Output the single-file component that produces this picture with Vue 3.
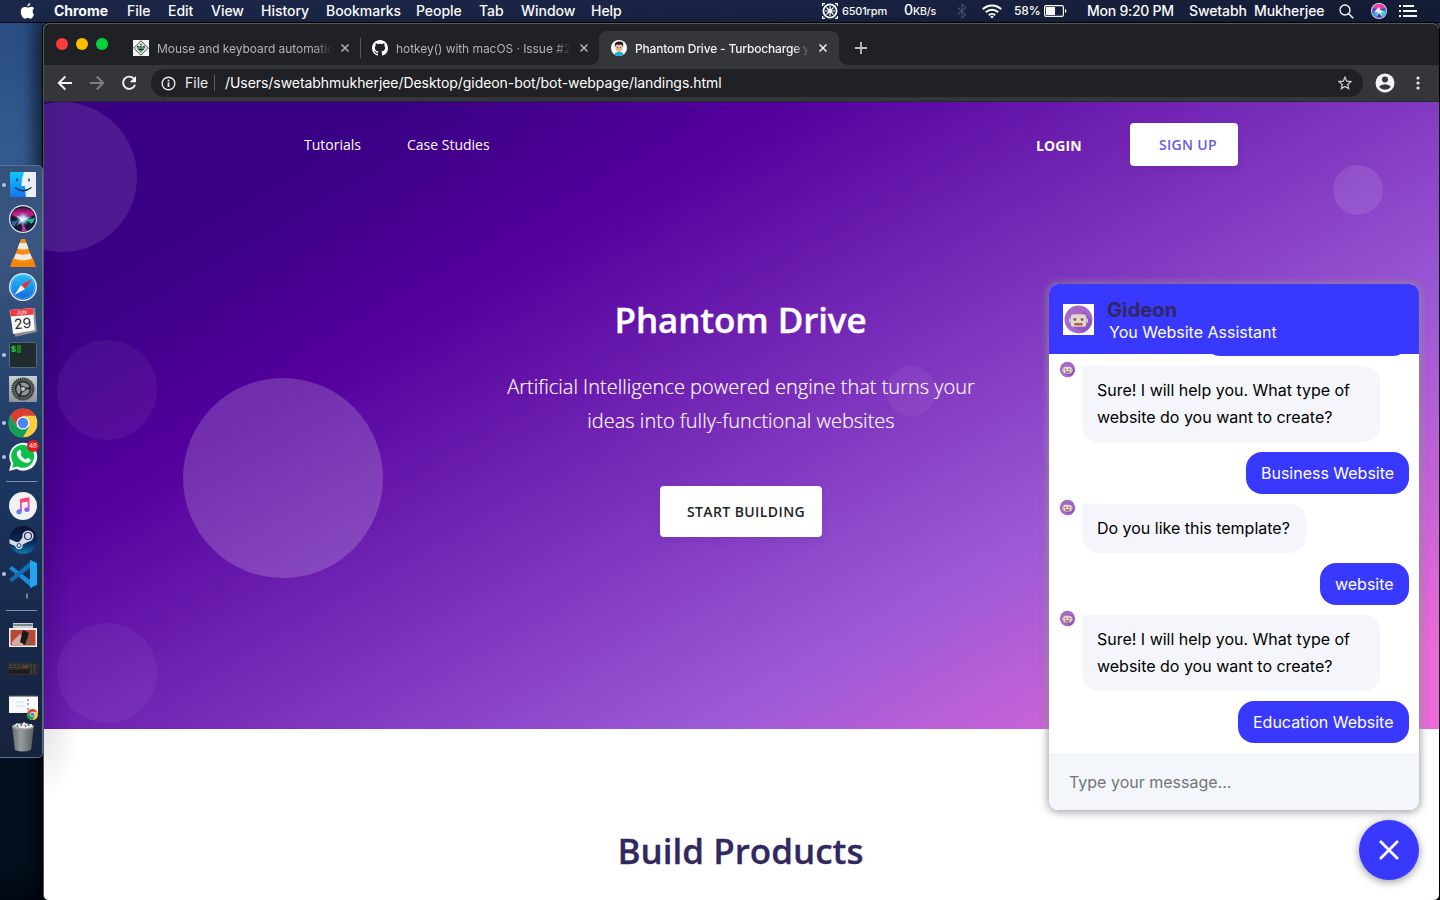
<script setup>
const menus = ['Chrome', 'File', 'Edit', 'View', 'History', 'Bookmarks', 'People', 'Tab', 'Window', 'Help']
const tabs = [
  { icon: 'docs', title: 'Mouse and keyboard automation' },
  { icon: 'github', title: 'hotkey() with macOS · Issue #24' },
  { icon: 'avatar', title: 'Phantom Drive - Turbocharge your', active: true }
]
const question = ['Sure! I will help you. What type of', 'website do you want to create?']
const messages = [
  { from: 'user', size: 'w205', lines: [] },
  { from: 'bot', size: 'w298', lines: question },
  { from: 'user', size: 'w163', lines: ['Business Website'] },
  { from: 'bot', size: 'w224', lines: ['Do you like this template?'] },
  { from: 'user', size: 'w89', lines: ['website'] },
  { from: 'bot', size: 'w298', lines: question },
  { from: 'user', size: 'w171', lines: ['Education Website'] }
]
</script>

<template>
  <div class="desktop">
    <svg width="0" height="0" class="defs">
      <defs>
        <linearGradient id="safari" x1="0" y1="0" x2="0" y2="1"><stop offset="0" stop-color="#22c0fb" /><stop offset="1" stop-color="#1569dd" /></linearGradient>
        <radialGradient id="siriGlow"><stop offset="0" stop-color="#fff" /><stop offset=".35" stop-color="#b8f4ff" stop-opacity=".85" /><stop offset="1" stop-color="#6fd0ff" stop-opacity="0" /></radialGradient>
        <linearGradient id="siriTop" x1="0" y1="0" x2="0" y2="1"><stop offset="0" stop-color="#3d1650" /><stop offset=".5" stop-color="#d0177f" /><stop offset="1" stop-color="#7a2a8c" /></linearGradient>
        <linearGradient id="note" x1="0" y1="0" x2="0" y2="1"><stop offset="0" stop-color="#ff3d60" /><stop offset=".4" stop-color="#f84a9a" /><stop offset=".75" stop-color="#8a5cf6" /><stop offset="1" stop-color="#2fa8fa" /></linearGradient>
        <linearGradient id="steam" x1="0" y1="0" x2="0" y2="1"><stop offset="0" stop-color="#0c1230" /><stop offset=".6" stop-color="#0b2a5a" /><stop offset="1" stop-color="#1179b0" /></linearGradient>
        <linearGradient id="metal" x1="0" y1="0" x2="0" y2="1"><stop offset="0" stop-color="#c9d0d4" /><stop offset="1" stop-color="#8c9499" /></linearGradient>
        <linearGradient id="bin" x1="0" y1="0" x2="1" y2="0"><stop offset="0" stop-color="#6d7070" /><stop offset=".4" stop-color="#a0a2a2" /><stop offset="1" stop-color="#5c5f5f" /></linearGradient>
        <linearGradient id="finder" x1="0" y1="0" x2="0" y2="1"><stop offset="0" stop-color="#12c4fd" /><stop offset="1" stop-color="#1277f3" /></linearGradient>
        <symbol id="chrome" viewBox="0 0 30 30">
          <circle cx="15" cy="15" r="15" fill="#ffcd40" />
          <path d="M2 7.500A15 15 0 0 1 28 7.500H15L8.500 18.800z" fill="#dd3e30" />
          <path d="M2 7.500A15 15 0 0 0 15 30L21.500 18.800H8.500z" fill="#11a05c" />
          <circle cx="15" cy="15" r="6.800" fill="#f4f4f4" /><circle cx="15" cy="15" r="5.400" fill="#4a86f0" />
        </symbol>
        <symbol id="robot" viewBox="0 0 30 30">
          <circle cx="15" cy="15" r="13.500" fill="#a668c9" />
          <path d="M20 7l8 9a13.500 13.500 0 0 1-9 12L9 21z" fill="#9355c0" />
          <path d="M15 6.500v4" stroke="#d8604a" stroke-width="1.200" />
          <rect x="7.500" y="10" width="15" height="12" rx="3" fill="#dcd9d2" /><path d="M6.600 14v4M23.400 14v4" stroke="#d4cfc9" stroke-width="1.600" />
          <circle cx="11.500" cy="15" r="1.400" fill="#9c5a3f" /><circle cx="18.500" cy="15" r="1.400" fill="#9c5a3f" />
          <rect x="11" y="18.300" width="8" height="2.400" rx=".6" fill="#b0603f" />
        </symbol>
      </defs>
    </svg>

    <header class="menubar">
      <svg class="apple" width="15" height="18" viewBox="0 0 15 18"><path d="M10.300 1c.1 1.700-1.300 3.400-2.900 3.400C7.200 2.700 8.700 1.200 10.300 1zM12.700 9.200c0-1.400.7-2.300 1.500-2.900-.9-1.200-2.200-1.500-3.100-1.500-1.300 0-2.400.8-3.200.8-.7 0-1.700-.7-2.900-.7C3 4.900.8 6.300.8 9.700c0 3.200 2.300 7 4.200 7 1 0 1.500-.7 2.800-.7 1.300 0 1.600.7 2.700.7 1.600 0 3-2.700 3.500-4.300-.9-.5-1.300-1.700-1.300-3.200z" fill="#fff" /></svg>
      <nav class="menus"><span v-for="m in menus" :key="m">{{ m }}</span></nav>
      <div class="status">
        <svg class="fan" width="16" height="16" viewBox="0 0 16 16" fill="none" stroke="#fff"><path d="M.5 3V.5H3M13 .5h2.500V3M15.500 13v2.500H13M3 15.500H.5V13" stroke-width="1.500" /><circle cx="8" cy="8" r="6.600" stroke-width="1.800" /><path d="M8 3v10M3 8h10M4.500 4.500l7 7M11.500 4.500l-7 7" stroke-width="1.200" /></svg>
        <span class="rpm">6501rpm</span>
        <span class="net">0<small>KB/s</small></span>
        <svg class="bt" width="10" height="16" viewBox="0 0 10 16" fill="none" stroke="#4a5068" stroke-width="1.100"><path d="M.8 4.500l8 7L5 14.800V1.200l3.800 3.300-8 7" /></svg>
        <svg class="wifi" width="20" height="15" viewBox="0 0 20 15" fill="none" stroke="#fff" stroke-width="2"><path d="M.8 5.200a13 13 0 0 1 18.400 0M3.800 8.300a8.800 8.800 0 0 1 12.400 0M6.800 11.200a4.600 4.600 0 0 1 6.400 0" /><path d="M8.300 12.700a2.400 2.400 0 0 1 3.400 0L10 14.600z" fill="#fff" stroke="none" /></svg>
        <span class="pct">58%</span>
        <svg class="bat" width="23" height="12" viewBox="0 0 23 12"><rect x=".6" y=".6" width="18.800" height="10.800" rx="1.600" fill="none" stroke="#fff" stroke-width="1.200" /><rect x="2" y="2" width="9" height="8" fill="#fff" /><path d="M21 4v4q1.500-.5 1.500-2T21 4z" fill="#fff" /></svg>
        <span class="clock">Mon 9:20 PM</span>
        <span class="user">Swetabh&nbsp; Mukherjee</span>
        <svg class="search" width="15" height="15" viewBox="0 0 15 15" fill="none" stroke="#fff" stroke-width="1.300"><circle cx="6" cy="6" r="5" /><path d="M9.700 9.700l4.500 4.500" stroke-width="1.600" /></svg>
        <svg class="siri" width="16" height="16" viewBox="0 0 16 16"><circle cx="8" cy="8" r="8" fill="#dfe6f5" /><circle cx="8" cy="8" r="7" fill="#4e49c4" /><path d="M2 4.500A7 7 0 0 1 14 4.500L8 7z" fill="#f53c9b" /><path d="M1.500 10L8 7l-3 7.200A7 7 0 0 1 1.500 10z" fill="#2fb0e8" /><path d="M8 7l6.700 1a7 7 0 0 1-3 6z" fill="#27d3cf" /><path d="M8 4l1.500 3L14 9.500l-4-.5L11.500 14 8 10l-3 4 1.500-5L3 9z" fill="#fff" opacity=".9" /></svg>
        <svg class="list" width="18" height="12" viewBox="0 0 18 12" fill="#fff"><path d="M0 0h2v2H0zM4 0h11v2H4zM0 5h2v2H0zM4 5h14v2H4zM0 10h2v2H0zM4 10h14v2H4z" /></svg>
      </div>
    </header>

    <section class="window">
      <div class="tabstrip">
        <div class="lights"><i class="red"></i><i class="amber"></i><i class="green"></i></div>
        <div v-for="t in tabs" :key="t.icon" class="tab" :class="[t.icon, { active: t.active }]">
          <svg v-if="t.icon === 'docs'" width="16" height="16" viewBox="0 0 16 16"><path d="M0 0h16v16H0z" fill="#f4f4f4" /><path d="M8 .8L15.200 8 8 15.200.8 8z" fill="#e9efe9" stroke="#333" stroke-width=".9" /><path d="M8 3l4.500 4.500L8 13 3.500 7.500z" fill="#4f9478" /><path d="M4 6.500h8M5.500 9.500h5" stroke="#222" stroke-width="1" /><circle cx="6.500" cy="5.800" r="1" fill="#fff" /><circle cx="9.500" cy="5.800" r="1" fill="#fff" /></svg>
          <svg v-else-if="t.icon === 'github'" width="16" height="16" viewBox="0 0 16 16"><path fill="#fff" d="M8 0C3.580 0 0 3.580 0 8c0 3.540 2.290 6.530 5.470 7.590.4.070.55-.17.55-.38 0-.19-.01-.82-.01-1.490-2.010.37-2.530-.49-2.690-.94-.09-.23-.48-.94-.82-1.130-.28-.15-.68-.52-.01-.53.63-.01 1.080.58 1.230.82.72 1.210 1.870.87 2.330.66.070-.52.28-.87.51-1.070-1.780-.2-3.640-.89-3.640-3.950 0-.87.31-1.590.82-2.150-.08-.2-.36-1.020.08-2.120 0 0 .67-.21 2.200.82.64-.18 1.320-.27 2-.27s1.360.09 2 .27c1.530-1.040 2.200-.82 2.200-.82.44 1.100.16 1.920.08 2.120.51.56.82 1.270.82 2.150 0 3.070-1.870 3.750-3.650 3.950.29.25.54.73.54 1.480 0 1.070-.01 1.930-.01 2.200 0 .21.15.46.55.38A8.010 8.010 0 0 0 16 8c0-4.420-3.580-8-8-8z" /></svg>
          <svg v-else width="16" height="16" viewBox="0 0 16 16"><circle cx="8" cy="8" r="8" fill="#fff" /><path d="M3.500 14.500Q4 11.800 8 11.800t4.500 2.700A8 8 0 0 1 3.500 14.500z" fill="#12b3d8" /><path d="M4.500 5h7v3.500Q11 12 8 12T4.500 8.500z" fill="#e9b996" /><path d="M4 7.500Q3 2 6.500 1.800q5.500-1.300 5.800 2.200l-.3 3.500-1-2.700H5z" fill="#241c1a" /><path d="M6 7.700h1M9 7.700h1" stroke="#333" /></svg>
          <span class="title">{{ t.title }}</span>
          <svg class="x" width="8" height="8" viewBox="0 0 8 8"><path d="M.5.500l7 7M7.500.500l-7 7" stroke="currentColor" stroke-width="1.500" /></svg>
        </div>
        <svg class="plus" width="12" height="12" viewBox="0 0 12 12"><path d="M6 0v12M0 6h12" stroke="#bdc1c6" stroke-width="1.800" /></svg>
      </div>

      <div class="toolbar">
        <svg class="back" width="16" height="16" viewBox="0 0 16 16" fill="none" stroke="#f1f3f4" stroke-width="1.900"><path d="M15 8H2M8.300 1.500L1.800 8l6.500 6.500" /></svg>
        <svg class="fwd" width="16" height="16" viewBox="0 0 16 16" fill="none" stroke="#7d7f83" stroke-width="1.900"><path d="M1 8h13M7.700 1.500L14.200 8l-6.500 6.500" /></svg>
        <svg class="reload" width="16" height="16" viewBox="0 0 16 16"><path d="M12.800 3.700A6.100 6.100 0 1 0 14 9.700" fill="none" stroke="#f1f3f4" stroke-width="1.900" /><path d="M15 .9v6.300H8.700z" fill="#f1f3f4" /></svg>
        <div class="omnibox">
          <svg width="15" height="15" viewBox="0 0 15 15"><circle cx="7.500" cy="7.500" r="6.300" fill="none" stroke="#e8eaed" stroke-width="1.400" /><path d="M6.600 6.500h1.800v4.500H6.600zM6.600 3.800h1.800v1.700H6.600z" fill="#e8eaed" /></svg>
          <span class="scheme">File</span><i class="bar"></i><span class="url">/Users/swetabhmukherjee/Desktop/gideon-bot/bot-webpage/landings.html</span>
          <svg class="star" width="14" height="14" viewBox="0 0 14 14"><path d="M7 1.200l1.700 4 4.300.4-3.300 2.800 1 4.200L7 10.400l-3.700 2.200 1-4.200L1 5.600l4.300-.4z" fill="none" stroke="#c8cacd" stroke-width="1.300" /></svg>
        </div>
        <svg class="profile" width="20" height="20" viewBox="0 0 20 20"><circle cx="10" cy="10" r="9.500" fill="#f1f3f4" /><circle cx="10" cy="6.500" r="3" fill="#35363a" /><path d="M4 13.800q2-2.600 6-2.600t6 2.600q-2.400 3-6 3t-6-3z" fill="#35363a" /></svg>
        <svg class="dots" width="4" height="14" viewBox="0 0 4 14" fill="#e8eaed"><circle cx="2" cy="2" r="1.600" /><circle cx="2" cy="7" r="1.600" /><circle cx="2" cy="12" r="1.600" /></svg>
      </div>

      <main class="page">
        <div class="hero">
          <i class="bubble b1"></i><i class="bubble b2"></i><i class="bubble b3"></i><i class="bubble b4"></i><i class="bubble b5"></i><i class="bubble b6"></i>
          <nav class="sitenav">
            <a class="tut">Tutorials</a><a class="case">Case Studies</a><a class="login">LOGIN</a><a class="signup">SIGN UP</a>
          </nav>
          <h1>Phantom Drive</h1>
          <p class="lead">Artificial Intelligence powered engine that turns your<br>ideas into fully-functional websites</p>
          <button class="start">START BUILDING</button>
        </div>
        <h2>Build Products</h2>
      </main>
    </section>

    <aside class="dock">
      <div class="app run"><svg viewBox="0 0 34 34"><path d="M4 4h26v25H4z" fill="#e9f0f7" /><path d="M4 4h14q-2.500 6-2.600 14H19q0 5 1 11H4z" fill="url(#finder)" /><path d="M11 10.500v3M23 10.500v3" stroke="#143d66" stroke-width="1.500" /><path d="M9 19.500q8 6.500 16.500 0" fill="none" stroke="#12304d" stroke-width="1.300" /></svg></div>
      <div class="app"><svg viewBox="0 0 34 34"><circle cx="17" cy="17" r="14" fill="#e3e3ea" /><circle cx="17" cy="17" r="12.800" fill="#171a33" /><path d="M5.500 13a12.500 12.500 0 0 1 23 0Q24 16 17 17 10 16 5.500 13z" fill="url(#siriTop)" /><path d="M17 16q5 2 12 0-1 4-4 6-3-4-8-6z" fill="#1fb79a" /><path d="M17 17q0 6 4 12-3 1-5 .5-1-6 1-12.500z" fill="#b43498" /><path d="M17 17q-6 2-9 8-2-2-3-6 6 1 12-2z" fill="#2d68a8" /><circle cx="17" cy="17" r="7" fill="url(#siriGlow)" /><path d="M9 13l8 3 9-1-8 3-1 1-7 5 5-6z" fill="#e8fbff" opacity=".7" /></svg></div>
      <div class="app"><svg viewBox="0 0 34 34"><path d="M7 22h20l3 9H4z" fill="#f5820d" /><path d="M15 3h4l8 22q-10 4-20 0z" fill="#fa8c12" /><path d="M13.500 7h7l2 5.500q-5 2-11 0zM9.800 17.500q7 2.300 14.400 0l2 5q-9 3.500-18.400 0z" fill="#edeae6" /></svg></div>
      <div class="app"><svg viewBox="0 0 34 34"><circle cx="17" cy="17" r="14" fill="#e9edf0" /><circle cx="17" cy="17" r="12.700" fill="url(#safari)" /><circle cx="17" cy="17" r="11.500" fill="none" stroke="#9fd6ff" stroke-dasharray=".6 1" /><path d="M26 9L19 19l-4-4z" fill="#ea3330" /><path d="M8.500 25L15 15l4 4z" fill="#f1f1f1" /></svg></div>
      <div class="app"><svg viewBox="0 0 34 34"><g transform="rotate(-5 17 17)"><path d="M4 5h26v24l-22 3z" fill="#918d88" /><path d="M5 5h23v22q-8 1-22 2z" fill="#f8f8f8" /><path d="M5 5h23v6.500H5z" fill="#ed3b42" /><text x="16.500" y="10.300" text-anchor="middle" font-size="5" fill="#fff">JUN</text><text x="16.500" y="24.500" text-anchor="middle" font-size="14" fill="#2c2c2c">29</text></g></svg></div>
      <div class="app run"><svg viewBox="0 0 34 34"><rect x="3.500" y="4.500" width="27" height="25" rx="1" fill="#202b30" stroke="#58666f" /><text x="5" y="14" font-size="8.500" font-weight="700" class="mono" fill="#20df38">$</text><path d="M11 7h4v8h-4z" fill="#128126" /></svg></div>
      <div class="app"><svg viewBox="0 0 34 34"><path d="M3 4h28v26H3z" fill="url(#metal)" /><circle cx="17" cy="17" r="10.500" fill="#686b6d" stroke="#303234" stroke-width="2.200" stroke-dasharray="1.400 .7" /><circle cx="17" cy="17" r="7.500" fill="#929597" stroke="#2c2e30" stroke-width="1.800" /><path d="M17 17l-5-7M17 17l8-1M17 17l-4 8" stroke="#292b2d" stroke-width="2" /><circle cx="17" cy="17" r="2.500" fill="#c5c8ca" stroke="#333" /></svg></div>
      <div class="app run"><svg viewBox="0 0 34 34"><use href="#chrome" x="2.500" y="2.500" width="29" height="29" /></svg></div>
      <div class="app run"><svg viewBox="0 0 34 34"><path d="M3 31l2-7.500A14 14 0 1 1 10.500 29z" fill="#f6f7f6" /><path d="M6.200 27.700l1.200-4.500a11.500 11.500 0 1 1 4 3.400z" fill="#0bc14a" /><path d="M12.500 10.500c1-1.300 2-.8 2.500.4.500 1.400 1 1.900-.5 3.400 1 2.500 3 4.400 5.500 5.200 1.300-1.500 1.700-1.800 3-1 1.600.9 2 1 1.300 2.500-1 2-3.500 2.300-6 1.300-4-1.500-7.500-5.200-7.500-9 0-1 .7-2.200 1.700-2.800z" fill="#fff" /><circle cx="27" cy="6" r="6" fill="#e8181b" /><text x="27" y="8.300" text-anchor="middle" font-size="6.500" fill="#fff">48</text></svg></div>
      <hr>
      <div class="app"><svg viewBox="0 0 34 34"><circle cx="17" cy="17" r="14" fill="#f1f1f4" /><path d="M14 10l9.500-1.700v12.500a2.600 2.300 0 1 1-1.700-2.200v-6l-6 1.200v9a2.700 2.400 0 1 1-1.800-2.200z" fill="url(#note)" /></svg></div>
      <div class="app"><svg viewBox="0 0 34 34"><circle cx="17" cy="17" r="14" fill="url(#steam)" /><path d="M3.500 16l9 4 6-8.500 6 6-9.500 5-2 3-4-2.500-5.500-2.500z" fill="#d6dce6" /><circle cx="22" cy="13" r="5.600" fill="#d6dce6" /><circle cx="22" cy="13" r="3.500" fill="none" stroke="#23375f" stroke-width="1.200" /><circle cx="13" cy="22.500" r="3.700" fill="#d6dce6" /><circle cx="13" cy="22.500" r="2" fill="none" stroke="#30466d" /></svg></div>
      <div class="app run"><svg viewBox="0 0 34 34"><path d="M3 11.500L5.800 9 26 24.500V31z" fill="#1a8bd8" /><path d="M3 22.500L5.800 25 26 9.500V3z" fill="#1170b3" /><path d="M24 3l7 3v22l-7 3z" fill="#24a3ef" /></svg></div>
      <div class="tiny"><svg width="34" height="12" viewBox="0 0 34 12"><path d="M21 2v6" stroke="#53647c" stroke-width="2.200" /><path d="M21 4v2" stroke="#a8b0a8" /></svg></div>
      <hr>
      <div class="app"><svg viewBox="0 0 34 34"><path d="M7 5h20v5H7z" fill="#ccd3d6" /><path d="M7.500 7h19" stroke="#333" /><path d="M3 10h28v19H3z" fill="#f0eeee" /><path d="M4.500 12h25v15.500h-25z" fill="#b84a35" /><path d="M6 24l8-8 5 4-2 7H6z" fill="#d7aaa1" /><path d="M17 12l6 3-4 12-5-3z" fill="#17191c" /><path d="M23 18l4 9h-7z" fill="#8b5a50" /></svg></div>
      <div class="app"><svg viewBox="0 0 34 34"><path d="M2 11h30v12H2z" fill="#2d2d2e" /><path d="M3 13h28M3 15.500h21" stroke="#55534f" stroke-dasharray="3 1" stroke-width=".8" /><path d="M17 14h5v1.300h-5z" fill="#a33" /><path d="M3 18h20v3.500H3z" fill="#1b1b1c" /><path d="M25.500 13v9M28.500 13v9" stroke="#4a4a4a" stroke-width=".8" /></svg></div>
      <div class="app"><svg viewBox="0 0 34 34"><path d="M3 9h29v18H3z" fill="#f8f9fd" /><path d="M3 9h29v1.500H3z" fill="#363b46" /><path d="M11 16h7M11 20h7" stroke="#b9e4df" /><path d="M21 14h2M21 18h2M21 23h2" stroke="#8a77e8" stroke-width="1.500" /><use href="#chrome" x="21" y="23" width="11" height="11" /></svg></div>
      <div class="app"><svg viewBox="0 0 34 34"><path d="M6 6q11-4 22 0l-3 24q-8 3-16 0z" fill="url(#bin)" opacity=".95" /><ellipse cx="17" cy="6.500" rx="11" ry="3.300" fill="#a5a7a7" /><path d="M8 6l3-3 4 2 3-3 4 3 4-1 0 3q-9 3-18-1z" fill="#ececec" /><path d="M11 5l1 2M16 3l-1 3M22 4l1 2" stroke="#416e61" stroke-width="1.300" /><path d="M19 5l1 2" stroke="#bf4b45" stroke-width="1.300" /></svg></div>
    </aside>

    <section class="chat">
      <header class="chathead">
        <span class="face"><svg width="31" height="31"><use href="#robot" width="31" height="31" /></svg></span>
        <div class="names"><strong>Gideon</strong><span>You Website Assistant</span></div>
      </header>
      <div class="log">
        <div v-for="(m, i) in messages" :key="i" class="msg" :class="m.from">
          <svg v-if="m.from === 'bot'" class="mini" width="17" height="17"><use href="#robot" width="17" height="17" /></svg>
          <div class="say" :class="m.size"><div v-for="l in m.lines" :key="l">{{ l }}</div></div>
        </div>
      </div>
      <footer class="compose">Type your message...</footer>
    </section>
    <button class="close"><svg width="22" height="22" viewBox="0 0 22 22"><path d="M2 2l18 18M20 2L2 20" stroke="#fff" stroke-width="2.700" /></svg></button>
  </div>
</template>

<style>
body { margin: 0; overflow: hidden; }
</style>
<style scoped>
* { box-sizing: border-box; }
.desktop { position: relative; width: 1440px; height: 900px; overflow: hidden; font-family: Inter, "Liberation Sans", sans-serif; background: linear-gradient(90deg, rgba(0,0,10,0) 55%, rgba(0,0,10,.35) 100%) 0 0 / 43px 900px no-repeat, linear-gradient(180deg, #274a80 0, #345a8e 150px, #2b4f80 280px, #14294c 640px, #04101f 760px, #03101f 860px, #010812 900px); }
.defs { position: absolute; }
svg { display: block; flex: none; }
.menubar { height: 23px; display: flex; background: linear-gradient(90deg, #1c2849, #1a2344 50%, #151c35); border-bottom: 1px solid #05070c; color: #fff; font-size: 14px; font-weight: 500; line-height: 22px; white-space: nowrap; }
.apple { margin: 2px 0 0 20px; }
.menus { margin-left: 19px; display: grid; grid-template-columns: 73px 41px 43px 50px 65px 90px 63px 42px 70px 40px; letter-spacing: -.03px; }
.menus span:first-child { font-weight: 700; }
.status { display: flex; margin-left: 191px; align-items: center; height: 22px; }
.rpm { width: 62px; margin-left: 4px; font-size: 11px; letter-spacing: -.2px; }
.net { width: 53px; font-size: 14px; }
.net small { font-size: 10.500px; letter-spacing: -.2px; }
.wifi { margin-left: 15px; }
.pct { margin-left: 12px; width: 30px; font-size: 12px; letter-spacing: -.1px; }
.clock { margin-left: 20px; width: 102px; letter-spacing: -.25px; }
.user { width: 150px; letter-spacing: -.1px; }
.siri { margin-left: 17px; }
.list { margin-left: 12px; }
.window { position: absolute; left: 43px; top: 23px; width: 1396px; height: 877px; overflow: hidden; border: solid #55575a; border-width: 1px 0 0 1px; border-radius: 6px 6px 5px 5px; background: #fff; box-shadow: 0 0 0 1px #000, -4px 6px 20px rgba(0,0,0,.45); }
.tabstrip { height: 41px; background: #202124; display: flex; align-items: flex-end; }
.lights { width: 77px; height: 41px; padding: 14px 0 0 12px; display: flex; gap: 8px; }
.lights i { width: 12px; height: 12px; border-radius: 50%; }
.red { background: #ff3b3b; } .amber { background: #ffbd00; } .green { background: #00d63c; }
.tab { position: relative; width: 239px; height: 34px; padding: 0 11px 0 12px; display: flex; align-items: center; color: #b0b3b7; font-size: 12px; letter-spacing: -.06px; }
.title { margin-left: 8px; width: 175px; overflow: hidden; white-space: nowrap; -webkit-mask-image: linear-gradient(90deg, #000 90%, transparent 100%); mask-image: linear-gradient(90deg, #000 90%, transparent 100%); }
.x { margin-left: 9px; }
.docs::after { content: ""; position: absolute; right: -1px; top: 7px; width: 1px; height: 20px; background: #55575a; }
.active { width: 240px; background: #35363a; color: #f1f3f4; border-radius: 8px 8px 0 0; font-weight: 500; letter-spacing: -.17px; }
.active::before, .active::after { content: ""; position: absolute; bottom: 0; width: 8px; height: 8px; }
.active::before { left: -8px; background: radial-gradient(circle at 0 0, transparent 7.500px, #35363a 8px); }
.active::after { right: -8px; background: radial-gradient(circle at 100% 0, transparent 7.500px, #35363a 8px); }
.plus { margin: 0 0 11px 16px; }
.toolbar { height: 37px; background: #35363a; border-bottom: 1px solid #28292c; display: flex; align-items: center; }
.back { margin-left: 13px; } .fwd, .reload { margin-left: 16px; }
.omnibox { margin-left: 14px; width: 1212px; height: 28px; border-radius: 14px; background: #202124; display: flex; align-items: center; padding: 0 11px 0 10px; font-size: 14px; line-height: 26px; color: #fff; }
.omnibox span { margin-top: -1px; }
.scheme { margin-left: 9px; width: 29px; color: #e8eaed; }
.bar { width: 1px; height: 16px; background: #5f6368; }
.url { margin-left: 10px; letter-spacing: -.055px; }
.star { margin-left: auto; }
.profile { margin-left: 12px; } .dots { margin-left: 21px; }
.page { font-family: "Open Sans", sans-serif; text-align: center; background: radial-gradient(ellipse 35px 70px at 0 627px, #e6e6e6, transparent); }
.hero { position: relative; height: 627px; overflow: hidden; padding-top: 21px; background: linear-gradient(90deg, rgba(20,0,60,.18), transparent 28px), linear-gradient(150deg, #390085 15%, #54009c 30%, #9b59d6 70%, #e96ad8 94%); color: #fff; }
.bubble { position: absolute; border-radius: 50%; background: rgba(255,255,255,.1); }
.b1 { width: 150px; height: 150px; left: -57px; top: 0; }
.b2 { width: 200px; height: 200px; left: 139px; top: 276px; background: rgba(255,255,255,.18); }
.b3 { width: 100px; height: 100px; left: 13px; top: 238px; background: rgba(255,255,255,.05); }
.b4 { width: 100px; height: 100px; left: 13px; top: 521px; background: rgba(255,255,255,.05); }
.b5 { width: 50px; height: 50px; left: 1289px; top: 63px; }
.b6 { width: 50px; height: 50px; left: 842px; top: 264px; background: rgba(255,255,255,.05); }
.sitenav { position: relative; display: flex; height: 43px; line-height: 43px; font-size: 14px; text-align: left; white-space: nowrap; }
.tut { margin-left: 260px; width: 103px; font-weight: 500; } .case { width: 629px; font-weight: 500; }
.login { width: 94px; font-weight: 700; line-height: 46px; letter-spacing: .1px; }
.signup { width: 108px; height: 43px; padding-left: 29px; border-radius: 4px; background: #fff; color: #675ce8; font-weight: 600; letter-spacing: .3px; box-shadow: 0 4px 6px rgba(50,50,93,.11); }
h1, h2 { margin: 0; font-size: 35px; font-weight: 600; line-height: 50px; padding-right: 2px; }
h1 { position: relative; margin-top: 129px; letter-spacing: -.1px; -webkit-text-stroke: .4px #fff; }
.lead { position: relative; margin: 25px 0 0; padding-right: 1px; font-size: 20px; font-weight: 300; line-height: 34px; -webkit-text-stroke: .15px #fff; }
.start { display: block; position: relative; margin: 48px 0 0 616px; width: 162px; height: 51px; padding: 0 0 0 10px; border: 0; border-radius: 4px; background: #fff; color: #212529; font: 600 14px "Open Sans", sans-serif; letter-spacing: .4px; box-shadow: 0 4px 6px rgba(50,50,93,.11); }
h2 { color: #32275f; padding-top: 97px; -webkit-text-stroke: .3px #32275f; }
.dock { position: absolute; left: -1px; top: 165px; width: 44px; height: 593px; padding: 2px 0 0 6px; border: 1px solid #58709a; border-radius: 0 5px 5px 0; background: linear-gradient(180deg, #35527d, #3a5580 90px, #294670 200px, #1c355f 320px, #182a4c 450px, #16233d 590px); }
.app { position: relative; height: 34px; width: 34px; }
.app svg { width: 34px; height: 34px; overflow: visible; }
.run::before { content: ""; position: absolute; left: -4px; top: 15px; width: 4px; height: 4px; border-radius: 50%; background: #b1c5e8; }
.dock hr { margin: 7px 0; width: 31px; height: 1px; border: 0; background: #7d8fb0; }
.tiny { height: 12px; }
.mono { font-family: "Liberation Mono", monospace; }
.chat { position: absolute; left: 1049px; top: 284px; width: 370px; height: 526px; border-radius: 9px; overflow: hidden; display: flex; flex-direction: column; background: #fff; font-size: 16px; box-shadow: 0 0 10px rgba(150,150,150,.8), 0 2px 8px rgba(120,120,120,.4); }
.chathead { height: 70px; flex: none; display: flex; padding: 20px 14px 0; background: #3838ff; color: #fff; }
.face { width: 31px; height: 31px; background: #fff; }
.names { margin: -7px 0 0 13px; display: flex; flex-direction: column; }
.names strong { color: #32275f; font-size: 20px; line-height: 26px; letter-spacing: .1px; }
.names span { line-height: 18px; padding-left: 2px; }
.log { flex: 1; min-height: 0; overflow: hidden; display: flex; flex-direction: column; justify-content: flex-end; gap: 10px; padding: 0 10px 10px; line-height: 27px; color: #000; }
.msg { flex: none; display: flex; }
.user.msg { width: auto; justify-content: flex-end; }
.mini { margin: -5px 6px 0 0; }
.say { padding: 11px 15px; border-radius: 0 16px 16px 16px; background: #f4f6fb; white-space: nowrap; letter-spacing: -.01px; }
.user .say { height: 42px; padding: 8px 15px 7px; border-radius: 16px; background: #3838ff; color: #fff; }
.w205 { width: 205px; } .w298 { width: 298px; } .w163 { width: 163px; } .w224 { width: 224px; } .w89 { width: 89px; } .w171 { width: 171px; }
.compose { height: 57px; flex: none; padding-left: 20px; line-height: 58px; background: #f3f6fa; color: #757575; }
.close { position: absolute; left: 1359px; top: 820px; width: 60px; height: 60px; border: 0; border-radius: 50%; background: #3838ff; display: grid; place-items: center; padding: 0; box-shadow: 0 2px 8px rgba(0,0,0,.4); }
</style>
